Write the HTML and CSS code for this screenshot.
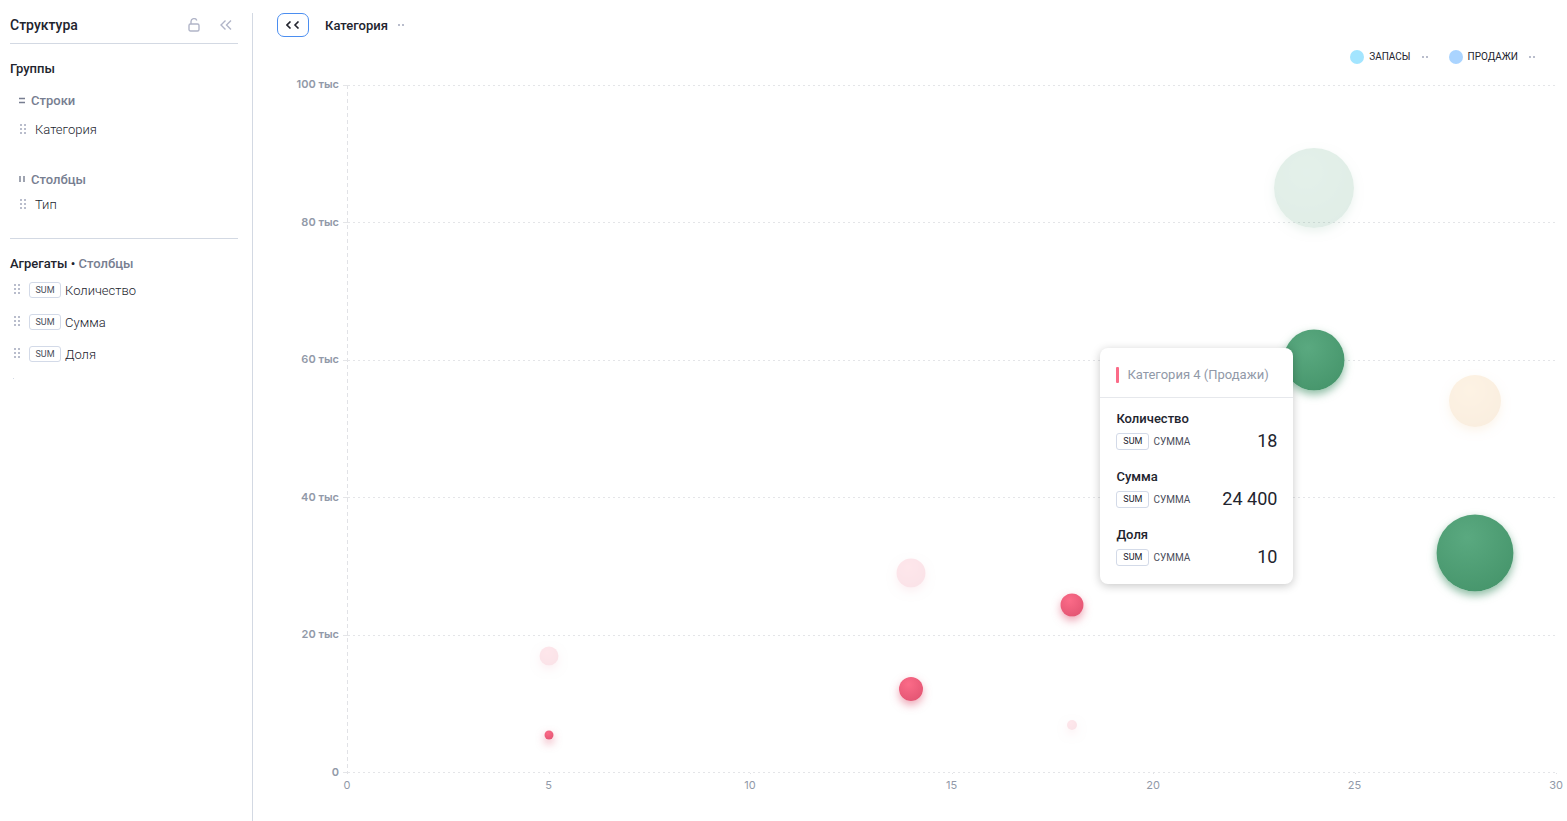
FILE: index.html
```
<!DOCTYPE html>
<html lang="ru">
<head>
    <meta charset="utf-8">
    <title>Структура</title>
    <link rel="stylesheet" href="styles.css">
</head>
<body>
    <!-- общие иконки -->
    <svg class="sprite" aria-hidden="true">
        <symbol id="drag" viewBox="0 0 6 10">
            <path d="M0 0h2v2H0zM4 0h2v2H4zM0 4h2v2H0zM4 4h2v2H4zM0 8h2v2H0zM4 8h2v2H4z"/>
        </symbol>
        <symbol id="more" viewBox="0 0 6 2">
            <path d="M0 0h2v2H0zM4 0h2v2H4z"/>
        </symbol>
    </svg>

    <!-- боковая панель -->
    <aside class="sidebar">
        <header class="sidebar-head">
            <h1>Структура</h1>
            <button type="button" class="icon-btn" aria-label="Закрепить">
                <svg width="12" height="14" viewBox="0 0 12 14"><rect x="1" y="6" width="10" height="7" rx="1.5"/><path d="M3 6V3.5a3 3 0 0 1 5.8-1"/></svg>
            </button>
            <button type="button" class="icon-btn" aria-label="Свернуть">
                <svg width="12" height="10" viewBox="0 0 12 10"><path d="M5.5.5L1 5l4.500 4.500M11 .5L6.500 5 11 9.500"/></svg>
            </button>
        </header>
        <section class="groups">
            <h2>Группы</h2>
            <h3><svg width="6" height="8" viewBox="0 0 6 8"><path d="M0 1.500h6M0 5.500h6"/></svg>Строки</h3>
            <ul class="fields rows">
                <li><svg class="drag"><use href="#drag"/></svg>Категория</li>
            </ul>
            <h3><svg width="6" height="8" viewBox="0 0 6 8"><path d="M1 0v6M5 0v6"/></svg>Столбцы</h3>
            <ul class="fields cols">
                <li><svg class="drag"><use href="#drag"/></svg>Тип</li>
            </ul>
        </section>
        <section class="aggregates">
            <h2>Агрегаты • <span>Столбцы</span></h2>
            <ul>
                <li><svg class="drag"><use href="#drag"/></svg><span class="badge">SUM</span><span class="name">Количество</span></li>
                <li><svg class="drag"><use href="#drag"/></svg><span class="badge">SUM</span><span class="name">Сумма</span></li>
                <li><svg class="drag"><use href="#drag"/></svg><span class="badge">SUM</span><span class="name">Доля</span></li>
            </ul>
            <div class="drop-end"></div>
        </section>
    </aside>

    <!-- диаграмма -->
    <main class="content">
        <nav class="toolbar">
            <button type="button" class="back" aria-label="Назад">
                <svg width="14" height="8" viewBox="0 0 14 8"><path d="M4.500.5L1 4l3.500 3.500M12.500.5L9 4l3.500 3.500"/></svg>
            </button>
            <span class="crumb">Категория</span>
            <button type="button" class="more" aria-label="Ещё"><svg><use href="#more"/></svg></button>
        </nav>
        <div class="legend">
            <div class="legend-item">
                <i class="dot stock"></i><span>ЗАПАСЫ</span>
                <button type="button" class="more" aria-label="Ещё"><svg><use href="#more"/></svg></button>
            </div>
            <div class="legend-item">
                <i class="dot sales"></i><span>ПРОДАЖИ</span>
                <button type="button" class="more" aria-label="Ещё"><svg><use href="#more"/></svg></button>
            </div>
        </div>
        <div class="chart">
            <div class="y-axis">
                <span>100 тыс</span>
                <span>80 тыс</span>
                <span>60 тыс</span>
                <span>40 тыс</span>
                <span>20 тыс</span>
                <span>0</span>
            </div>
            <div class="plot">
                <div class="grid">
                    <i></i><i></i><i></i><i></i><i></i><i></i>
                </div>
                <!-- точки: x из 30, y из 100 тыс -->
                <div class="bubble green faded" style="--x: 24; --y: 85; --size: 80px"></div>
                <div class="bubble green" style="--x: 24; --y: 60; --size: 61px"></div>
                <div class="bubble orange faded" style="--x: 28; --y: 54; --size: 52px"></div>
                <div class="bubble green" style="--x: 28; --y: 32; --size: 77px"></div>
                <div class="bubble pink faded" style="--x: 14; --y: 29; --size: 29px"></div>
                <div class="bubble pink" style="--x: 18; --y: 24.4; --size: 23px"></div>
                <div class="bubble pink faded" style="--x: 5; --y: 17; --size: 19px"></div>
                <div class="bubble pink" style="--x: 14; --y: 12.2; --size: 24px"></div>
                <div class="bubble pink faded" style="--x: 18; --y: 7; --size: 10px"></div>
                <div class="bubble pink" style="--x: 5; --y: 5.5; --size: 9px"></div>

                <div class="tooltip" style="--x: 18; --y: 24.4">
                    <div class="tooltip-head">Категория 4 (Продажи)</div>
                    <dl>
                        <dt>Количество</dt>
                        <dd><span class="badge">SUM</span><small>СУММА</small><b>18</b></dd>
                        <dt>Сумма</dt>
                        <dd><span class="badge">SUM</span><small>СУММА</small><b>24 400</b></dd>
                        <dt>Доля</dt>
                        <dd><span class="badge">SUM</span><small>СУММА</small><b>10</b></dd>
                    </dl>
                </div>
            </div>
            <div class="x-axis">
                <span>0</span>
                <span>5</span>
                <span>10</span>
                <span>15</span>
                <span>20</span>
                <span>25</span>
                <span>30</span>
            </div>
        </div>
    </main>
</body>
</html>
```

FILE: styles.css
```
* {
    box-sizing: border-box;
}
body {
    display: flex;
    min-height: 100vh;
    margin: 0;
    background: #fff;
    color: #22242e;
    font: 13px/16px Roboto, "Liberation Sans", sans-serif;
}
h1, h2, h3, ul, dl, dd {
    margin: 0;
    padding: 0;
}
ul {
    list-style: none;
}
svg {
    flex: none;
    fill: none;
}
button {
    padding: 0;
    border: 0;
    background: none;
    cursor: pointer;
}
.sprite {
    position: absolute;
    width: 0;
    height: 0;
}

/* боковая панель */
.sidebar {
    flex: none;
    width: 253px;
    margin-top: 13px;
    padding: 0 14px 0 10px;
    border-right: 1px solid #d3d9e3;
}
.sidebar-head {
    display: flex;
    align-items: center;
    gap: 16px;
    height: 31px;
    padding: 0 4px 6px 0;
    border-bottom: 1px solid #d3d9e3;
}
h1 {
    flex: 1;
    font-size: 14px;
    font-weight: 500;
}
h2 {
    font-size: 13px;
    font-weight: 500;
}
h2 span {
    color: #777e91;
}
h3 {
    display: flex;
    align-items: center;
    gap: 6px;
    padding-left: 9px;
    color: #777e91;
    font-size: 13px;
    font-weight: 500;
}
h3 svg {
    stroke: #777e91;
    stroke-width: 1.4;
}
.icon-btn {
    display: flex;
    align-items: center;
    justify-content: center;
    width: 16px;
    height: 16px;
}
.icon-btn svg {
    stroke: #b1b5c8;
    stroke-width: 1.4;
}
.groups {
    height: 195px;
    padding-top: 17px;
    border-bottom: 1px solid #d3d9e3;
}
.groups h2 {
    margin-bottom: 16px;
}
.fields {
    padding-left: 10px;
}
.fields li {
    display: flex;
    align-items: center;
    gap: 9px;
    font-weight: 300;
}
.rows {
    padding-top: 13px;
    padding-bottom: 34px;
}
.cols {
    padding-top: 9px;
}
.drag {
    width: 6px;
    height: 10px;
    margin-bottom: 2px;
    fill: #b9bdcc;
}
.aggregates {
    padding-top: 17px;
}
.aggregates ul {
    padding: 10px 0 0 4px;
}
.aggregates li {
    display: flex;
    align-items: center;
    height: 16px;
    margin-bottom: 16px;
    font-weight: 300;
}
.aggregates .badge {
    margin: 0 4px 0 9px;
    color: #4a4d5a;
}
.name {
    padding-top: 2px;
}
.badge {
    width: 32px;
    height: 16px;
    border: 1px solid #d3dae8;
    border-radius: 3px;
    font-size: 9px;
    font-weight: 400;
    line-height: 14px;
    text-align: center;
}
.drop-end {
    width: 1px;
    height: 1px;
    margin: 5px 0 0 3px;
    background: #d3d9e3;
}

/* верхняя строка */
.content {
    display: flex;
    flex: 1;
    flex-direction: column;
    padding: 12px 11px 0 24px;
}
.toolbar {
    display: flex;
    align-items: center;
    height: 26px;
}
.back {
    display: flex;
    align-items: center;
    justify-content: center;
    width: 32px;
    height: 24px;
    margin-right: 16px;
    border: 1px solid #4b8ef0;
    border-radius: 7px;
}
.back svg {
    stroke: #22242e;
    stroke-width: 1.6;
}
.crumb {
    padding-top: 1px;
    font-weight: 500;
}
.more {
    display: flex;
    align-items: center;
    height: 16px;
    margin-left: 10px;
}
.more svg {
    width: 6px;
    height: 2px;
    fill: #b9bdcc;
}
.legend {
    display: flex;
    justify-content: flex-end;
    gap: 21px;
    padding: 11px 21px 0 0;
}
.legend-item {
    display: flex;
    align-items: center;
    font-size: 10px;
}
.legend .more {
    margin-left: 11px;
}
.dot {
    width: 14px;
    height: 14px;
    margin-right: 5px;
    border-radius: 50%;
}
.stock {
    background: #a3e5ff;
}
.sales {
    background: #aad4ff;
}

/* оси и сетка */
.chart {
    display: grid;
    flex: 1;
    grid-template-columns: 70px 1fr;
    grid-template-rows: 1fr 48px;
    padding-top: 20px;
}
.y-axis, .x-axis {
    display: flex;
    justify-content: space-between;
    color: #9199a8;
    font: 11px/14px Inter, "Liberation Sans", sans-serif;
}
.y-axis {
    flex-direction: column;
    margin: -8px 0 -6px;
    padding-right: 8px;
    font-weight: 600;
    text-align: right;
}
.x-axis {
    grid-column: 2;
    margin: 0 -10px;
}
.x-axis span {
    width: 20px;
    padding-top: 5px;
    background: linear-gradient(#e1e2e6, #e1e2e6) 10px 0 / 1px 1px no-repeat;
    text-align: center;
}
.plot {
    position: relative;
    background: repeating-linear-gradient(#e1e2e6 0 4px, transparent 4px 7px) 0 0 / 1px 100% no-repeat;
}
.grid {
    display: flex;
    flex-direction: column;
    justify-content: space-between;
    height: 100%;
    margin-left: -4px;
}
.grid i {
    height: 1px;
    background:
        linear-gradient(#e4e5e8, #e4e5e8) 0 0 / 5px 1px no-repeat,
        repeating-linear-gradient(90deg, #e4e5e8 0 2px, transparent 2px 5px);
}
.bubble {
    position: absolute;
    left: calc(var(--x) / 30 * 100%);
    bottom: calc(var(--y) * 1%);
    width: var(--size);
    height: var(--size);
    border-radius: 50%;
    transform: translate(-50%, 50%);
}
.green {
    background: radial-gradient(circle at 40% 30%, #5aa980, #429167);
    box-shadow: 0 4px 8px rgba(66, 145, 103, 0.6);
}
.orange {
    background: radial-gradient(circle at 40% 30%, #f5b45c, #dc9338);
    box-shadow: 0 4px 8px rgba(228, 155, 59, 0.6);
}
.pink {
    background: radial-gradient(circle at 40% 30%, #fb6b88, #de506e);
    box-shadow: 0 4px 8px rgba(222, 80, 110, 0.5);
}
.faded {
    opacity: 0.16;
}

/* подсказка */
.tooltip {
    position: absolute;
    left: calc(var(--x) / 30 * 100% + 28px);
    bottom: calc(var(--y) * 1% + 21px);
    width: 193px;
    border-radius: 8px;
    background: #fff;
    box-shadow: 0 2px 10px rgba(0, 0, 0, 0.22);
}
.tooltip-head {
    display: flex;
    align-items: center;
    gap: 8px;
    height: 50px;
    padding: 4px 16px 0;
    border-bottom: 1px solid #e6e8ec;
    color: #9199a8;
}
.tooltip-head::before {
    width: 3px;
    height: 16px;
    border-radius: 1px;
    background: #fb6b88;
    content: "";
}
.tooltip dl {
    padding: 13px 16px 0;
}
.tooltip dt {
    font-weight: 500;
}
.tooltip dd {
    display: flex;
    align-items: center;
    gap: 4px;
    height: 28px;
    margin-bottom: 14px;
}
.tooltip .badge {
    width: 33px;
    height: 17px;
    line-height: 15px;
}
.tooltip dd:last-child {
    margin-bottom: 13px;
}
.tooltip small {
    flex: 1;
    padding-top: 1px;
    color: #4a4d5a;
    font-size: 10px;
}
.tooltip b {
    font-size: 18px;
    font-weight: 400;
}
```
